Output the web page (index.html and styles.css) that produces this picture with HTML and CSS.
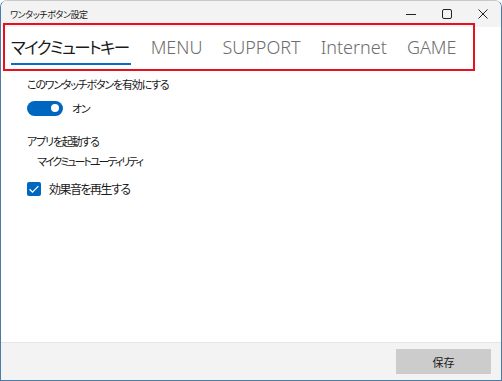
FILE: index.html
```html
<!DOCTYPE html>
<html lang="ja">
<head>
<meta charset="utf-8">
<link rel="stylesheet" href="styles.css">
</head>
<body>
<div class="window">
  <div class="titlebar">
    <span class="title">ワンタッチボタン設定</span>
    <div class="controls">
      <span class="ctl"><svg width="10" height="10" viewBox="0 0 10 10"><path d="M0 5.5h10" stroke="#222" stroke-width="1"/></svg></span>
      <span class="ctl"><svg width="10" height="10" viewBox="0 0 10 10"><rect x="0.5" y="0.5" width="9" height="9" rx="1.5" fill="none" stroke="#222" stroke-width="1"/></svg></span>
      <span class="ctl"><svg width="10" height="10" viewBox="0 0 10 10"><path d="M0.5 0.5l9 9M9.5 0.5l-9 9" stroke="#222" stroke-width="1"/></svg></span>
    </div>
  </div>
  <div class="content">
    <nav class="tabs">
      <span class="tab active">マイクミュートキー</span>
      <span class="tab">MENU</span>
      <span class="tab">SUPPORT</span>
      <span class="tab">Internet</span>
      <span class="tab">GAME</span>
    </nav>
    <div class="settings">
      <div class="label">このワンタッチボタンを有効にする</div>
      <div class="toggle-row">
        <span class="toggle"><span class="knob"></span></span>
        <span class="state">オン</span>
      </div>
      <div class="label app-label">アプリを起動する</div>
      <div class="app">マイクミュートユーティリティ</div>
      <div class="check-row">
        <span class="checkbox"><svg width="14" height="14" viewBox="0 0 14 14"><path d="M2.6 7.2l2.9 2.9 5.9-6" fill="none" stroke="#fff" stroke-width="1.3"/></svg></span>
        <span class="check-label">効果音を再生する</span>
      </div>
    </div>
  </div>
  <div class="footer">
    <button class="save">保存</button>
  </div>
  <div class="highlight"></div>
</div>
</body>
</html>
```

FILE: styles.css
```css
html, body {
  margin: 0;
  padding: 0;
  background: #ffffff;
}
body {
  width: 502px;
  height: 381px;
  overflow: hidden;
  font-family: "Noto Sans CJK JP", "Noto Sans", sans-serif;
  font-feature-settings: "palt";
  color: #1a1a1a;
}
.window {
  position: relative;
  box-sizing: border-box;
  width: 502px;
  height: 381px;
  border: 1px solid #4b7aa6;
  border-top-color: #c9c9c9;
  border-radius: 7px 7px 0 0;
  background: #ffffff;
  display: flex;
  flex-direction: column;
  overflow: hidden;
}
.titlebar {
  height: 26px;
  flex: none;
  background: #f3f3f3;
  display: flex;
  align-items: center;
  justify-content: space-between;
  padding-left: 9px;
}
.title {
  font-size: 9px;
  color: #1a1a1a;
  letter-spacing: -0.4px;
}
.controls {
  display: flex;
  align-self: stretch;
}
.ctl {
  width: 36px;
  display: flex;
  align-items: center;
  justify-content: center;
}
.content {
  flex: 1;
  background: #ffffff;
}
.tabs {
  display: flex;
  gap: 20px;
  padding: 8px 0 0 10px;
  align-items: flex-end;
}
.tab {
  font-family: "Noto Sans", "Noto Sans CJK JP", sans-serif;
  font-weight: 300;
  font-size: 18px;
  color: #6d6d6d;
  line-height: 25px;
  padding-bottom: 3px;
  border-bottom: 2px solid transparent;
}
.tab.active {
  font-family: "Noto Sans CJK JP", sans-serif;
  font-weight: 400;
  color: #1a1a1a;
  border-bottom-color: #0a6cc8;
  font-size: 16.5px;
  letter-spacing: -1.6px;
  padding-right: 2px;
}
.settings {
  padding: 11px 0 0 26px;
  font-size: 11px;
  letter-spacing: -1.2px;
}
.label {
  line-height: 16px;
}
.toggle-row {
  display: flex;
  align-items: center;
  gap: 9px;
  margin-top: 8px;
  height: 16px;
}
.toggle {
  width: 36px;
  height: 15px;
  border-radius: 8px;
  background: #0067c0;
  position: relative;
}
.knob {
  position: absolute;
  right: 4px;
  top: 3.5px;
  width: 8px;
  height: 8px;
  border-radius: 50%;
  background: #ffffff;
}
.app-label {
  margin-top: 17px;
}
.app {
  margin-top: 4px;
  padding-left: 10px;
  line-height: 16px;
  letter-spacing: -2px;
}
.check-row {
  display: flex;
  align-items: center;
  gap: 8px;
  margin-top: 11px;
}
.checkbox {
  width: 14px;
  height: 14px;
  border-radius: 2px;
  background: #0067c0;
  display: flex;
}
.check-label {
  font-size: 12px;
  letter-spacing: -1.5px;
}
.footer {
  flex: none;
  height: 37px;
  border-top: 1px solid #e5e5e5;
  background: #f3f3f3;
  display: flex;
  align-items: center;
  justify-content: flex-end;
  padding-right: 10px;
}
.save {
  width: 95px;
  height: 25px;
  border: none;
  background: #cccccc;
  font-family: "Noto Sans CJK JP", sans-serif;
  font-size: 11px;
  color: #1a1a1a;
  padding: 0;
}
.highlight {
  position: absolute;
  left: 2px;
  top: 22px;
  width: 468px;
  height: 44px;
  border: 2px solid #e8101e;
}
```
